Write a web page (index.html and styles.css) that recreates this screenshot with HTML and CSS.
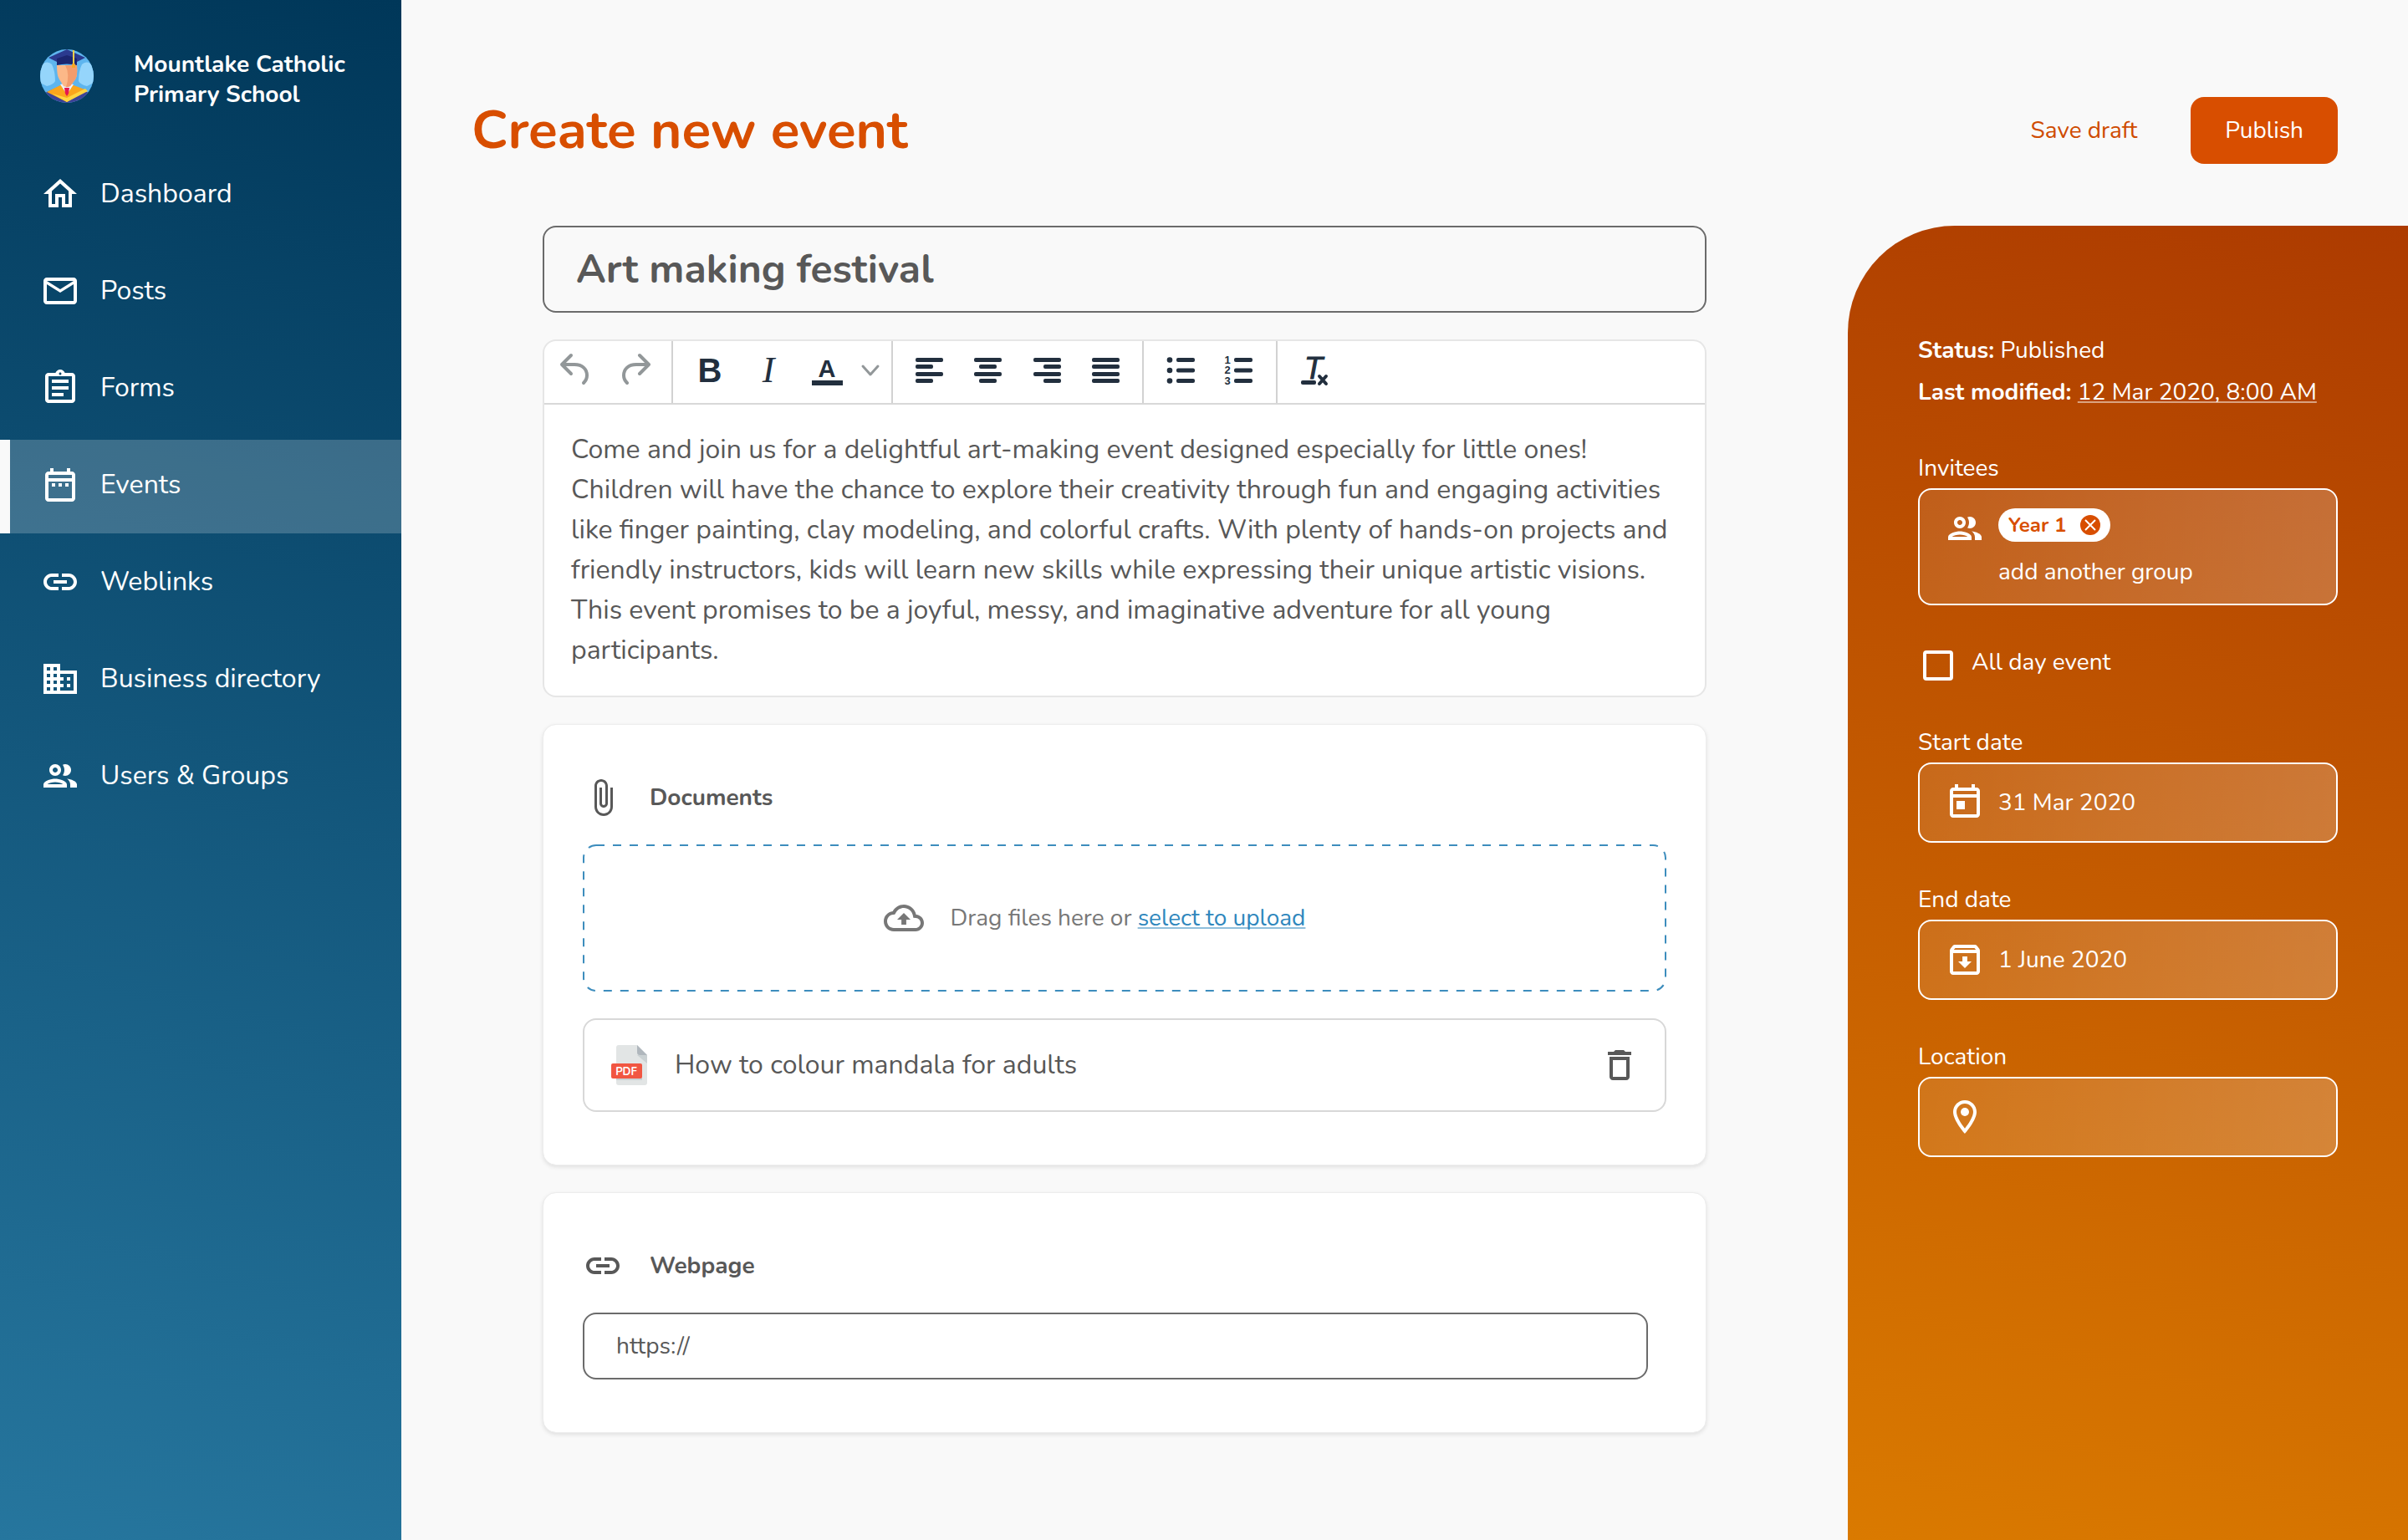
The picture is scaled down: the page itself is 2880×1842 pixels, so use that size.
FILE: index.html
```html
<!DOCTYPE html>
<html lang="en">
<head>
<meta charset="utf-8">
<meta name="viewport" content="width=device-width, initial-scale=1">
<title>Create new event</title>
<link rel="stylesheet" href="styles.css">
</head>
<body>
<svg class="sprite" aria-hidden="true">
  <symbol id="i-home" viewBox="0 0 24 24"><path d="M12 5.69l5 4.5V18h-2v-6H9v6H7v-7.81l5-4.5M12 3L2 12h3v8h6v-6h2v6h6v-8h3L12 3z"/></symbol>
  <symbol id="i-mail" viewBox="0 0 24 24"><path d="M22 6c0-1.1-.9-2-2-2H4c-1.1 0-2 .9-2 2v12c0 1.1.9 2 2 2h16c1.1 0 2-.9 2-2V6zm-2 0l-8 5-8-5h16zm0 12H4V8l8 5 8-5v10z"/></symbol>
  <symbol id="i-form" viewBox="0 0 24 24"><path d="M7 15h7v2H7zm0-4h10v2H7zm0-4h10v2H7zm12-4h-4.18C14.4 1.84 13.3 1 12 1c-1.3 0-2.4.84-2.82 2H5c-.14 0-.27.01-.4.04-.39.08-.74.28-1.01.55-.18.18-.33.4-.43.64-.1.23-.16.49-.16.77v14c0 .27.06.54.16.78s.25.45.43.64c.27.27.62.47 1.01.55.13.02.26.03.4.03h14c1.1 0 2-.9 2-2V5c0-1.1-.9-2-2-2zm-7-.25c.41 0 .75.34.75.75s-.34.75-.75.75-.75-.34-.75-.75.34-.75.75-.75zM19 19H5V5h14v14z"/></symbol>
  <symbol id="i-range" viewBox="0 0 24 24"><path d="M7 11h2v2H7v-2zm14-5v14c0 1.1-.9 2-2 2H5c-1.11 0-2-.9-2-2l.01-14c0-1.1.88-2 1.99-2h1V2h2v2h8V2h2v2h1c1.1 0 2 .9 2 2zM5 8h14V6H5v2zm14 12V10H5v10h14zm-4-7h2v-2h-2v2zm-4 0h2v-2h-2v2z"/></symbol>
  <symbol id="i-link" viewBox="0 0 24 24"><path d="M17 7h-4v2h4c1.65 0 3 1.35 3 3s-1.35 3-3 3h-4v2h4c2.76 0 5-2.24 5-5s-2.24-5-5-5zm-6 8H7c-1.65 0-3-1.35-3-3s1.35-3 3-3h4V7H7c-2.76 0-5 2.24-5 5s2.24 5 5 5h4v-2zm-3-4h8v2H8z"/></symbol>
  <symbol id="i-domain" viewBox="0 0 24 24"><path d="M12 7V3H2v18h20V7H12zM6 19H4v-2h2v2zm0-4H4v-2h2v2zm0-4H4V9h2v2zm0-4H4V5h2v2zm4 12H8v-2h2v2zm0-4H8v-2h2v2zm0-4H8V9h2v2zm0-4H8V5h2v2zm10 12h-8v-2h2v-2h-2v-2h2v-2h-2V9h8v10zm-2-8h-2v2h2v-2zm0 4h-2v2h2v-2z"/></symbol>
  <symbol id="i-people" viewBox="0 0 24 24"><path d="M9 13.75c-2.34 0-7 1.17-7 3.5V19h14v-1.75c0-2.33-4.66-3.5-7-3.5zM4.34 17c.84-.58 2.87-1.25 4.66-1.25s3.82.67 4.66 1.25H4.34zM9 12c1.93 0 3.5-1.57 3.5-3.5S10.93 5 9 5 5.5 6.57 5.5 8.5 7.07 12 9 12zm0-5c.83 0 1.5.67 1.5 1.5S9.83 10 9 10s-1.5-.67-1.5-1.5S8.17 7 9 7zm7.04 6.81c1.16.84 1.96 1.96 1.96 3.44V19h4v-1.75c0-2.02-3.5-3.17-5.96-3.44zM15 12c1.93 0 3.5-1.57 3.5-3.5S16.93 5 15 5c-.54 0-1.04.13-1.5.35.63.89 1 1.98 1 3.15s-.37 2.26-1 3.15c.46.22.96.35 1.5.35z"/></symbol>
  <symbol id="i-clip" viewBox="0 0 24 24"><path d="M16.5 6v11.5c0 2.21-1.79 4-4 4s-4-1.79-4-4V5c0-1.38 1.12-2.5 2.5-2.5s2.5 1.12 2.5 2.5v10.5c0 .55-.45 1-1 1s-1-.45-1-1V6H10v9.5c0 1.38 1.12 2.5 2.5 2.5s2.5-1.12 2.5-2.5V5c0-2.21-1.79-4-4-4S7 2.79 7 5v12.5c0 3.04 2.46 5.5 5.5 5.5s5.5-2.46 5.5-5.5V6h-1.5z"/></symbol>
  <symbol id="i-cloud" viewBox="0 0 24 24"><path d="M19.35 10.04C18.67 6.59 15.64 4 12 4 9.11 4 6.6 5.64 5.35 8.04 2.34 8.36 0 10.91 0 14c0 3.31 2.69 6 6 6h13c2.76 0 5-2.24 5-5 0-2.64-2.05-4.78-4.65-4.96zM19 18H6c-2.21 0-4-1.79-4-4 0-2.05 1.53-3.76 3.56-3.97l1.07-.11.5-.95C8.08 7.14 9.94 6 12 6c2.62 0 4.88 1.86 5.39 4.43l.3 1.5 1.53.11c1.56.1 2.78 1.41 2.78 2.96 0 1.65-1.35 3-3 3zM8 13h2.55v3h2.9v-3H16l-4-4z"/></symbol>
  <symbol id="i-trash" viewBox="0 0 24 24"><path d="M6 19c0 1.1.9 2 2 2h8c1.1 0 2-.9 2-2V7H6v12zM8 9h8v10H8V9zm7.5-5l-1-1h-5l-1 1H5v2h14V4h-3.5z"/></symbol>
  <symbol id="i-today" viewBox="0 0 24 24"><path d="M19 3h-1V1h-2v2H8V1H6v2H5c-1.11 0-1.99.9-1.99 2L3 19c0 1.1.89 2 2 2h14c1.1 0 2-.9 2-2V5c0-1.1-.9-2-2-2zm0 16H5V9h14v10zm0-12H5V5h14v2zM7 11h5v5H7z"/></symbol>
  <symbol id="i-archive" viewBox="0 0 24 24"><path d="M20.54 5.23l-1.39-1.68C18.88 3.21 18.47 3 18 3H6c-.47 0-.88.21-1.16.55L3.46 5.23C3.17 5.57 3 6.02 3 6.5V19c0 1.1.9 2 2 2h14c1.1 0 2-.9 2-2V6.5c0-.48-.17-.93-.46-1.27zM6.24 5h11.52l.83 1H5.42l.82-1zM5 19V8h14v11H5zm8.45-9h-2.9v3H8l4 4 4-4h-2.55z"/></symbol>
  <symbol id="i-place" viewBox="0 0 24 24"><path d="M12 2C8.13 2 5 5.13 5 9c0 5.25 7 13 7 13s7-7.75 7-13c0-3.87-3.13-7-7-7zM7 9c0-2.76 2.24-5 5-5s5 2.24 5 5c0 2.88-2.88 7.19-5 9.88C9.92 16.21 7 11.85 7 9z"/><circle cx="12" cy="9" r="2.5"/></symbol>
</svg>

<div class="app">
  <aside class="sidebar">
    <div class="brand">
      <svg class="brand-logo" viewBox="0 0 64 64" aria-hidden="true">
        <clipPath id="disc"><circle cx="32" cy="32" r="32"/></clipPath>
        <g clip-path="url(#disc)">
          <rect width="64" height="64" fill="#5eb5ee"/>
          <path d="M0 20Q8 12 14 18Q18 26 18 38Q16 42 8 44L0 40Z" fill="#95d5fb"/>
          <path d="M64 20Q56 12 50 18Q46 26 46 38Q48 42 56 44L64 40Z" fill="#95d5fb"/>
          <path d="M6 52L32 40L58 52L52 64H12Z" fill="#3d4396"/>
          <path d="M8 51L24 43H40L56 49L32 63Z" fill="#fba61c"/>
          <path d="M54 47L57 50L32 63L14 53L32 58Z" fill="#ffd540"/>
          <path d="M24 42L32 54L40 42L32 40Z" fill="#eef1fb"/>
          <path d="M29 46h6l-1 7-2 3-2-3z" fill="#e6174f"/>
          <path d="M20 19H44Q45 32 42 36L36 44Q32 46 28 44L23 36Q20 32 20 19Z" fill="#fcb888"/>
          <path d="M30 19H44Q45 32 42 36L36 44Q32 46 31 45Q36 30 30 19Z" fill="#f39c6c"/>
          <path d="M10 10L32 0L54 10L44 15H20Z" fill="#2b3a8f"/>
          <path d="M20 11L32 7L44 11V19Q32 16 20 19Z" fill="#1c2670"/>
          <path d="M40 0V18" stroke="#f5cf4a" stroke-width="2"/>
          <path d="M38 22V18Q40 15 42 18V22Z" fill="#f7a823"/>
        </g>
      </svg>
      <p class="brand-name">Mountlake Catholic Primary School</p>
    </div>
    <nav class="nav">
      <a class="nav-item" href="#"><svg class="icon"><use href="#i-home"/></svg>Dashboard</a>
      <a class="nav-item" href="#"><svg class="icon"><use href="#i-mail"/></svg>Posts</a>
      <a class="nav-item" href="#"><svg class="icon"><use href="#i-form"/></svg>Forms</a>
      <a class="nav-item nav-item-active" href="#" aria-current="page"><svg class="icon"><use href="#i-range"/></svg>Events</a>
      <a class="nav-item" href="#"><svg class="icon"><use href="#i-link"/></svg>Weblinks</a>
      <a class="nav-item" href="#"><svg class="icon"><use href="#i-domain"/></svg>Business directory</a>
      <a class="nav-item" href="#"><svg class="icon"><use href="#i-people"/></svg>Users &amp; Groups</a>
    </nav>
  </aside>

  <main class="main">
    <header class="page-header">
      <h1 class="page-title">Create new event</h1>
      <div class="actions">
        <button class="btn-text" type="button">Save draft</button>
        <button class="btn-primary" type="button">Publish</button>
      </div>
    </header>

    <div class="columns">
      <form class="form">
        <input class="title-input" type="text" aria-label="Event title" value="Art making festival">

        <div class="editor">
          <div class="toolbar" role="toolbar" aria-label="Formatting">
            <div class="tools tools-history">
              <button class="tool" type="button" aria-label="Undo"><svg class="icon line" viewBox="0 0 48 48"><path d="M20 6L9 17L20 28M9 17H24C34 17 39 23 39 30C39 34 37 37 35 39"/></svg></button>
              <button class="tool" type="button" aria-label="Redo"><svg class="icon line" viewBox="0 0 48 48"><path d="M28 6L39 17L28 28M39 17H24C14 17 9 23 9 30C9 34 11 37 13 39"/></svg></button>
            </div>
            <div class="tools tools-text">
              <button class="tool" type="button" aria-label="Bold"><svg class="icon" viewBox="0 0 48 48"><text class="g-bold" x="24" y="38">B</text></svg></button>
              <button class="tool" type="button" aria-label="Italic"><svg class="icon" viewBox="0 0 48 48"><text class="g-italic" x="24" y="38">I</text></svg></button>
              <div class="color-tool">
                <button class="tool" type="button" aria-label="Text colour"><svg class="icon" viewBox="0 0 48 48"><text class="g-color" x="24" y="32">A</text><rect x="6" y="36" width="37" height="6"/></svg></button>
                <button class="caret" type="button" aria-label="Choose text colour"><svg class="caret-icon line" viewBox="0 0 24 48"><path d="M3 19L12 29L21 19"/></svg></button>
              </div>
            </div>
            <div class="tools">
              <button class="tool" type="button" aria-label="Align left"><svg class="icon" viewBox="0 0 48 48"><rect x="7" y="9" width="33" height="5" rx="2"/><rect x="7" y="17" width="21" height="5" rx="2"/><rect x="7" y="26" width="33" height="5" rx="2"/><rect x="7" y="34" width="21" height="5" rx="2"/></svg></button>
              <button class="tool" type="button" aria-label="Align centre"><svg class="icon" viewBox="0 0 48 48"><rect x="7" y="9" width="33" height="5" rx="2"/><rect x="13" y="17" width="21" height="5" rx="2"/><rect x="7" y="26" width="33" height="5" rx="2"/><rect x="13" y="34" width="21" height="5" rx="2"/></svg></button>
              <button class="tool" type="button" aria-label="Align right"><svg class="icon" viewBox="0 0 48 48"><rect x="8" y="9" width="33" height="5" rx="2"/><rect x="20" y="17" width="21" height="5" rx="2"/><rect x="8" y="26" width="33" height="5" rx="2"/><rect x="20" y="34" width="21" height="5" rx="2"/></svg></button>
              <button class="tool" type="button" aria-label="Justify"><svg class="icon" viewBox="0 0 48 48"><rect x="8" y="9" width="33" height="5" rx="2"/><rect x="8" y="17" width="33" height="5" rx="2"/><rect x="8" y="26" width="33" height="5" rx="2"/><rect x="8" y="34" width="33" height="5" rx="2"/></svg></button>
            </div>
            <div class="tools">
              <button class="tool" type="button" aria-label="Bulleted list"><svg class="icon" viewBox="0 0 48 48"><circle cx="11" cy="11.5" r="3.3"/><circle cx="11" cy="24" r="3.3"/><circle cx="11" cy="36.5" r="3.3"/><rect x="19" y="9" width="22" height="5" rx="2"/><rect x="19" y="21.500" width="22" height="5" rx="2"/><rect x="19" y="34" width="22" height="5" rx="2"/></svg></button>
              <button class="tool" type="button" aria-label="Numbered list"><svg class="icon" viewBox="0 0 48 48"><text class="g-num" x="10" y="15.500">1</text><text class="g-num" x="10" y="28">2</text><text class="g-num" x="10" y="40.500">3</text><rect x="18" y="9" width="22" height="5" rx="2"/><rect x="18" y="21.500" width="22" height="5" rx="2"/><rect x="18" y="34" width="22" height="5" rx="2"/></svg></button>
            </div>
            <div class="tools">
              <button class="tool" type="button" aria-label="Clear formatting"><svg class="icon" viewBox="0 0 48 48"><text class="g-clear" x="23" y="34">T</text><rect x="8" y="36" width="18" height="5" rx="2"/><path class="clear-mark" d="M30 31L38 40M38 31L30 40"/></svg></button>
            </div>
          </div>
          <textarea class="editor-body" rows="6" aria-label="Event description" spellcheck="false">Come and join us for a delightful art-making event designed especially for little ones! Children will have the chance to explore their creativity through fun and engaging activities like finger painting, clay modeling, and colorful crafts. With plenty of hands-on projects and friendly instructors, kids will learn new skills while expressing their unique artistic visions. This event promises to be a joyful, messy, and imaginative adventure for all young participants.</textarea>
        </div>

        <section class="card">
          <h2 class="card-title"><svg class="icon"><use href="#i-clip"/></svg>Documents</h2>
          <div class="dropzone">
            <svg class="dropzone-frame" aria-hidden="true"><rect class="dropzone-dash" x="1" y="1" rx="15"/></svg>
            <svg class="icon"><use href="#i-cloud"/></svg>
            <p class="dropzone-text">Drag files here or <a class="upload-link" href="#">select to upload</a></p>
          </div>
          <div class="file">
            <svg class="pdf-icon" viewBox="0 0 44 48" aria-hidden="true">
              <path d="M9 0H31L43 12V45Q43 48 40 48H9Q6 48 6 45V3Q6 0 9 0Z" fill="#e2e5e5"/>
              <path d="M31 12H43V22Z" fill="#cad1d3"/>
              <path d="M31 0L43 12H34Q31 12 31 9Z" fill="#b0b7bd"/>
              <rect x="6" y="39" width="31" height="3" fill="#cad1d3"/>
              <rect y="22" width="37" height="18" rx="2" fill="#f15642"/>
              <text class="pdf-text" x="18" y="36">PDF</text>
            </svg>
            <span class="file-name">How to colour mandala for adults</span>
            <button class="tool" type="button" aria-label="Delete file"><svg class="icon"><use href="#i-trash"/></svg></button>
          </div>
        </section>

        <section class="card">
          <h2 class="card-title"><svg class="icon"><use href="#i-link"/></svg><label for="url">Webpage</label></h2>
          <div class="url-row"><input class="url-input" id="url" type="text" value="https://"></div>
        </section>
      </form>

      <aside class="panel">
        <div class="status">
          <p><strong>Status:</strong> Published</p>
          <p><strong>Last modified:</strong> <a class="modified" href="#">12 Mar 2020, 8:00 AM</a></p>
        </div>
        <div class="fields">
          <div class="field">
            <label for="invitees">Invitees</label>
            <div class="box box-tall">
              <svg class="icon"><use href="#i-people"/></svg>
              <div class="invitees">
                <span class="chip">Year 1
                  <button class="chip-remove" type="button" aria-label="Remove Year 1"><svg class="chip-icon" viewBox="0 0 24 24"><circle cx="12" cy="12" r="12"/><path d="M6 6L18 18M18 6L6 18"/></svg></button>
                </span>
                <input class="box-input" id="invitees" type="text" placeholder="add another group">
              </div>
            </div>
          </div>
          <div class="check-row">
            <input class="check" id="allday" type="checkbox">
            <label for="allday">All day event</label>
          </div>
          <div class="field">
            <label for="start">Start date</label>
            <div class="box"><svg class="icon"><use href="#i-today"/></svg><input class="box-input" id="start" type="text" value="31 Mar 2020"></div>
          </div>
          <div class="field">
            <label for="end">End date</label>
            <div class="box"><svg class="icon"><use href="#i-archive"/></svg><input class="box-input" id="end" type="text" value="1 June 2020"></div>
          </div>
          <div class="field">
            <label for="location">Location</label>
            <div class="box"><svg class="icon"><use href="#i-place"/></svg><input class="box-input" id="location" type="text"></div>
          </div>
        </div>
      </aside>
    </div>
  </main>
</div>
</body>
</html>
```
FILE: styles.css
```css
* { box-sizing: border-box; }

body {
  margin: 0;
  background: #f9f9f9;
  color: #585858;
  font-family: "Nunito", "Nunito Sans", "Lato", sans-serif;
  font-size: 28px;
  line-height: 48px;
}

h1, h2, p { margin: 0; }

button, input, textarea {
  margin: 0;
  padding: 0;
  border: 0;
  background: none;
  color: inherit;
  font: inherit;
  outline: 0;
}

button { cursor: pointer; }

.sprite { display: none; }

.icon {
  display: block;
  flex: none;
  width: 48px;
  height: 48px;
  fill: currentColor;
}

.app {
  display: flex;
  min-height: 100vh;
}

/* Sidebar */
.sidebar {
  flex: none;
  width: 480px;
  padding-top: 59px;
  background: linear-gradient(195deg, #003759, #26769e);
  color: #fff;
}

.brand {
  display: flex;
  gap: 48px;
  padding: 0 48px;
  margin-bottom: 47px;
}

.brand-logo {
  flex: none;
  width: 64px;
  height: 64px;
}

.brand-name {
  font-weight: 700;
  line-height: 36px;
}

.nav {
  display: flex;
  flex-direction: column;
  gap: 4px;
}

.nav-item {
  display: flex;
  align-items: center;
  gap: 24px;
  height: 112px;
  padding: 0 24px 4px 36px;
  border-left: 12px solid transparent;
  color: #fff;
  font-size: 32px;
  text-decoration: none;
}

.nav-item-active {
  border-left-color: #f9f9f9;
  background: rgba(255, 255, 255, .2);
  background-clip: padding-box;
}

/* Main area */
.main {
  display: flex;
  flex: 1;
  flex-direction: column;
  min-width: 0;
}

.page-header {
  display: flex;
  align-items: center;
  justify-content: space-between;
  padding: 116px 84px 74px;
}

.page-title {
  color: #d84e00;
  font-size: 64px;
  font-weight: 700;
  line-height: 80px;
}

.actions {
  display: flex;
  align-items: center;
  gap: 64px;
}

.btn-text { color: #cf4b00; }

.btn-primary {
  height: 80px;
  padding: 0 41px;
  border-radius: 16px;
  background: #d84e00;
  color: #fff;
}

.columns {
  display: flex;
  flex: 1;
}

.form {
  display: flex;
  flex: 1;
  flex-direction: column;
  gap: 32px;
  min-width: 0;
  padding: 0 169px 64px;
}

.title-input {
  width: 100%;
  height: 104px;
  padding: 0 38px;
  border: 2px solid #6b6b6b;
  border-radius: 16px;
  font-size: 48px;
  font-weight: 700;
}

/* Editor */
.editor {
  overflow: hidden;
  border: 2px solid #e6e6e6;
  border-radius: 16px;
  background: #fff;
}

.toolbar {
  display: flex;
  height: 76px;
  border-bottom: 2px solid #d8d8d8;
}

.tools {
  display: flex;
  align-items: center;
  gap: 22px;
  padding: 0 20px 4px;
  border-right: 2px solid #d2d2d2;
  color: #222f3e;
}

.tools:last-child { border-right: 0; }

.tools-history {
  gap: 26px;
  padding: 0 18px 4px 12px;
}

.tools-text { padding-right: 13px; }

.color-tool {
  display: flex;
  gap: 16px;
}

.tool { width: 48px; height: 48px; }

.caret { width: 24px; height: 48px; }

.caret-icon {
  display: block;
  width: 24px;
  height: 48px;
}

.line {
  fill: none;
  stroke: #929799;
  stroke-width: 4;
  stroke-linecap: round;
  stroke-linejoin: round;
}

.caret-icon.line { stroke-width: 3; }

.toolbar text { text-anchor: middle; }
.g-bold { font: 700 40px "Liberation Sans", sans-serif; }
.g-italic { font: italic 400 44px "Liberation Serif", serif; }
.g-color { font: 700 29px "Liberation Sans", sans-serif; }
.g-num { font: 700 13px "Liberation Sans", sans-serif; }

.g-clear {
  font: italic 400 36px "Liberation Sans", sans-serif;
  stroke: currentColor;
  stroke-width: 1;
}

.clear-mark {
  fill: none;
  stroke: currentColor;
  stroke-width: 4;
  stroke-linecap: round;
}

.editor-body {
  display: block;
  width: 100%;
  padding: 30px 32px;
  overflow: hidden;
  resize: none;
  font-size: 32px;
  line-height: 48px;
}

/* Cards */
.card {
  padding: 63px 47px;
  border: 1px solid #ededed;
  border-radius: 16px;
  background: #fff;
  background-clip: padding-box;
  box-shadow: 0 2px 5px rgba(0, 0, 0, .1);
}

.card-title {
  display: flex;
  align-items: center;
  gap: 32px;
  margin-bottom: 32px;
  font-size: 28px;
  font-weight: 700;
}

.dropzone {
  position: relative;
  display: flex;
  align-items: center;
  justify-content: center;
  gap: 32px;
  height: 176px;
  margin-bottom: 32px;
  padding-right: 72px;
  color: #777;
}

.dropzone-frame {
  position: absolute;
  inset: 0;
  width: 100%;
  height: 100%;
}

.dropzone-dash {
  width: calc(100% - 2px);
  height: calc(100% - 2px);
  fill: none;
  stroke: #3d8dbd;
  stroke-width: 2;
  stroke-dasharray: 10 10;
}

.dropzone-text { position: relative; }

.upload-link {
  color: #2f87bd;
  text-decoration: underline 2px #8fbfdc;
  text-decoration-skip-ink: none;
  text-underline-offset: 2px;
}

.file {
  display: flex;
  align-items: center;
  gap: 32px;
  height: 112px;
  padding: 0 30px 0 32px;
  border: 2px solid #d8d8d8;
  border-radius: 16px;
}

.pdf-icon {
  flex: none;
  width: 44px;
  height: 48px;
}

.pdf-text {
  fill: #fff;
  font: 700 13px "Nunito", sans-serif;
  text-anchor: middle;
}

.file-name {
  flex: 1;
  font-size: 32px;
}

.url-row { padding-right: 22px; }

.url-input {
  display: block;
  width: 100%;
  height: 80px;
  padding: 0 38px;
  border: 2px solid #6b6b6b;
  border-radius: 16px;
}

/* Settings panel */
.panel {
  display: flex;
  flex: none;
  flex-direction: column;
  gap: 42px;
  width: 670px;
  padding: 124px 84px 84px;
  border-top-left-radius: 128px;
  background: linear-gradient(195deg, #ad3b00, #da7a00);
  color: #fff;
}

.status { line-height: 50px; }

.modified {
  color: #fff;
  text-decoration: underline 2px rgba(255, 255, 255, .5);
  text-decoration-skip-ink: none;
  text-underline-offset: 2px;
}

.fields {
  display: flex;
  flex-direction: column;
  gap: 44px;
}

.field {
  display: flex;
  flex-direction: column;
}

.box {
  display: flex;
  align-items: center;
  gap: 16px;
  height: 96px;
  padding: 0 30px;
  border: 2px solid #fff;
  border-radius: 16px;
  background: linear-gradient(100deg, rgba(255, 255, 255, .1), rgba(255, 255, 255, .22)) padding-box;
}

.box-tall {
  align-items: flex-start;
  height: auto;
  padding: 22px 30px 14px;
}

.box-input {
  flex: 1;
  width: 100%;
  min-width: 0;
  height: 48px;
}

.box-input::placeholder {
  color: #fff;
  opacity: 1;
}

.invitees {
  display: flex;
  flex: 1;
  flex-direction: column;
  align-items: flex-start;
  gap: 12px;
}

.invitees .box-input { flex: none; }

.chip {
  display: flex;
  align-items: center;
  gap: 17px;
  height: 40px;
  padding: 0 12px;
  border-radius: 20px;
  background: #fff;
  color: #d84e00;
  font-size: 24px;
  font-weight: 700;
}

.chip-remove { width: 24px; height: 24px; }

.chip-icon {
  display: block;
  width: 24px;
  height: 24px;
  fill: #d84e00;
  stroke: #fff;
  stroke-width: 2;
}

.chip-icon circle { stroke: none; }

.check-row {
  display: flex;
  gap: 16px;
  height: 52px;
}

.check {
  align-self: flex-end;
  width: 36px;
  height: 36px;
  margin: 6px;
  border: 4px solid #fff;
  border-radius: 4px;
  appearance: none;
}
```
